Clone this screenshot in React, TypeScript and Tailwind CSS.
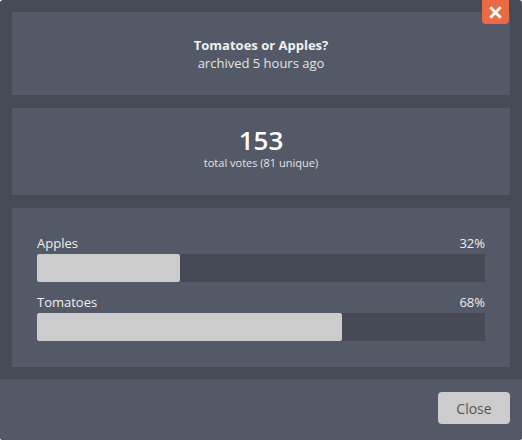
const results = [
  { name: 'Apples', pct: 32 },
  { name: 'Tomatoes', pct: 68 },
];

export default function App() {
  return (
    <div
      className="relative flex h-[440px] w-[522px] flex-col overflow-hidden rounded-[3px] bg-[#474b56] text-[#eeeeee]"
      style={{ fontFamily: '"Open Sans", "Liberation Sans", sans-serif' }}
    >
      <button className="absolute top-0 right-[13px] flex h-[24px] w-[27px] items-center justify-center rounded-b-[4px] bg-[#e96a43] text-white">
        <svg width="13" height="13" viewBox="0 0 14 14">
          <path d="M2.5 2.5 L11.5 11.5 M11.5 2.5 L2.5 11.5" stroke="white" strokeWidth="3.2" strokeLinecap="square" />
        </svg>
      </button>
      <div className="flex flex-col gap-[13px] px-3 pt-3 pr-3">
        <div className="flex h-[83px] flex-col items-center justify-center bg-[#535966] pt-[1px] text-[13px] leading-[18px]">
          <div className="font-bold text-[#f0f0f0]">Tomatoes or Apples?</div>
          <div className="text-[#e4e4e4]">archived 5 hours ago</div>
        </div>
        <div className="flex h-[87px] flex-col items-center justify-center bg-[#535966] pb-[8px]">
          <div className="text-[26px] leading-[30px] font-semibold text-white">153</div>
          <div className="text-[11px] leading-[15px] text-[#e4e4e4]">total votes (81 unique)</div>
        </div>
        <div className="flex h-[159px] flex-col gap-[11px] bg-[#535966] px-[25px] pt-[26px]">
          {results.map((r) => (
            <div key={r.name} className="flex flex-col">
              <div className="flex justify-between text-[13px] leading-[18px] text-[#eeeeee]">
                <span>{r.name}</span>
                <span>{r.pct}%</span>
              </div>
              <div className="mt-[2px] h-[28px] w-full bg-[#464a55]">
                <div className="h-full rounded-[2px] bg-[#cccccc]" style={{ width: `${r.pct}%` }} />
              </div>
            </div>
          ))}
        </div>
      </div>
      <div className="mt-3 flex flex-1 items-center justify-end border-t border-[#4d525e] bg-[#535966] pr-3">
        <button className="mb-[4px] h-[32px] w-[72px] rounded-[4px] bg-[#cccccc] text-[14px] text-[#555555]">
          Close
        </button>
      </div>
    </div>
  );
}
